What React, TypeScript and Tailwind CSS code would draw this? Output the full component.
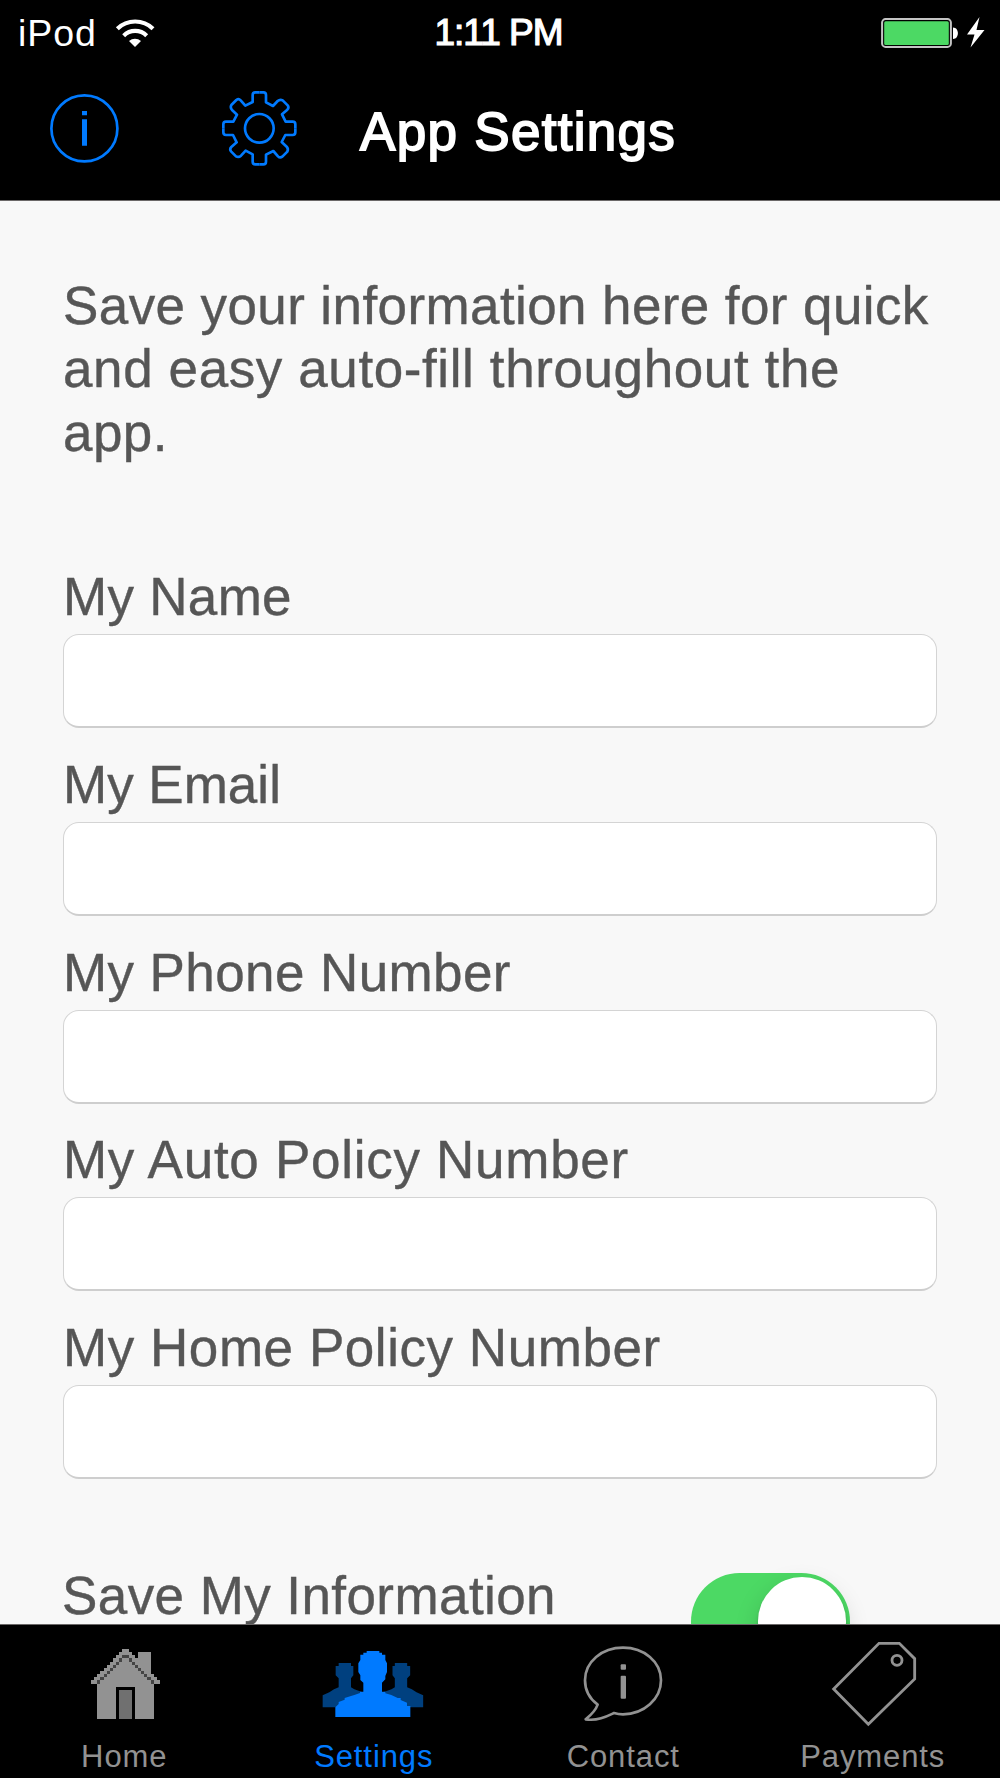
import React, { useState } from "react";

const fields = [
  { id: "name", label: "My Name", tracking: "tracking-[0.3px]" },
  { id: "email", label: "My Email", tracking: "tracking-[0px]" },
  { id: "phone", label: "My Phone Number", tracking: "tracking-[0.4px]" },
  { id: "auto", label: "My Auto Policy Number", tracking: "tracking-[0.72px]" },
  { id: "home", label: "My Home Policy Number", tracking: "tracking-[0.55px]" },
];

function WifiIcon() {
  return (
    <svg width="40" height="30" viewBox="345 48 120 90" fill="none" stroke="white">
      <path d="M352 80A77 77 0 0 1 459 80" strokeWidth="12.5" />
      <path d="M371 101A49 49 0 0 1 440 101" strokeWidth="12.5" />
      <path d="M405 135L387 117A28 28 0 0 1 423 117Z" fill="white" stroke="none" />
    </svg>
  );
}

function BatteryIcon() {
  return (
    <svg width="104" height="32" viewBox="881 16 104 32">
      <rect x="882.1" y="18.1" width="68.8" height="27.8" rx="3.5" fill="none" stroke="#c4c4c4" strokeWidth="2" />
      <rect x="884.2" y="20.2" width="64.6" height="23.8" rx="1.5" fill="#4cd964" />
      <path d="M953 26.5C959.5 26.5 959.5 38 953 38Z" fill="white" />
      <path d="M979.5 16L967 33.5H974.5L970.5 46.5L984.5 29H976.5Z" fill="white" />
    </svg>
  );
}

function InfoIcon() {
  return (
    <svg width="70" height="70" viewBox="0 0 70 70">
      <circle cx="35.4" cy="35.4" r="33" fill="none" stroke="#007aff" strokeWidth="2.7" />
      <path d="M33 18h5v4.2h-5zM33 26.2h5v26.5h-5z" fill="#007aff" />
    </svg>
  );
}

function GearIcon() {
  // one quarter of the outline, turned around the centre
  const quarter =
    "M0 -108H12Q20 -108 20 -100V-78L41 -67L55 -82Q62 -88 70 -84L85 -69Q90 -62 84 -56L68 -42L79 -20H100Q108 -20 108 -12V0";
  return (
    <svg width="76" height="76" viewBox="-115 -115 228 228" fill="none" stroke="#007aff" strokeWidth="8">
      {[0, 90, 180, 270].map((a) => (
        <path key={a} d={quarter} transform={`rotate(${a})`} strokeLinejoin="round" />
      ))}
      <circle r="43" />
    </svg>
  );
}

function HomeIcon() {
  const rows = [0, 1, 2, 3, 4, 5, 6, 7, 8, 9, 10];
  return (
    <svg width="69" height="70" viewBox="0 0 22 22.3" preserveAspectRatio="none" shapeRendering="crispEdges">
      <g fill="#929292">
        {rows.map((r) => (
          <rect key={r} x={10 - r} y={r} width={2 + r * 2} height="1.05" />
        ))}
        <rect x="15" y="1" width="4" height="8" />
        <rect x="2" y="11" width="18" height="11.3" />
      </g>
      <g fill="#444444">
        {rows.slice(2).map((r) => (
          <React.Fragment key={r}>
            <rect x={12 - r} y={r} width="1" height="1" />
            <rect x={9 + r} y={r} width="1" height="1" />
          </React.Fragment>
        ))}
      </g>
      <rect x="8" y="12.1" width="6" height="10.2" fill="black" />
      <rect x="9" y="13.1" width="4" height="9.2" fill="#707070" />
    </svg>
  );
}

function PeopleIcon() {
  const back =
    "M118 99H155V108H162V136L155 145V172L165 178L190 187V232H70V196L90 187L104 178L118 172V145L109 136V108H118Z";
  return (
    <svg width="102" height="68" viewBox="68 60 306 204">
      <g fill="#00407f">
        <path d={back} />
        <path d={back} transform="translate(441.5 0) scale(-1 1)" />
      </g>
      <path
        d="M202 63H240V68H248V74H258V90L263 100V126L258 138V148L248 158V185H258V190L276 195L295 204H304V210L323 218V228H333V261H108V232L118 222V216L136 209V204L155 198L165 195L182 189V185H192V158L183 150V136L177 126V100L183 90V74H192V68H202Z"
        fill="#007aff"
      />
    </svg>
  );
}

function ContactIcon() {
  return (
    <svg width="80" height="78" viewBox="100 46 240 234">
      <path
        d="M144 225C118 206 106 182 106 152C106 96 157 54 220 54C283 54 334 96 334 152C334 208 283 254 220 254Q206 254 193 250C174 259 144 275 108 269C120 259 136 247 144 225Z"
        fill="none"
        stroke="#929292"
        strokeWidth="8"
        strokeLinejoin="round"
      />
      <rect x="213" y="104" width="16" height="16" rx="3" fill="#929292" />
      <rect x="213" y="138" width="16" height="69" rx="3" fill="#929292" />
    </svg>
  );
}

function TagIcon() {
  return (
    <svg width="86" height="86" viewBox="122 33 258 258" fill="none" stroke="#929292" strokeWidth="8.5">
      <path d="M130 177L266 40H327L373 86V147L234 283Z" />
      <circle cx="320" cy="91" r="15" />
    </svg>
  );
}

const tabs = [
  { label: "Home", icon: <HomeIcon />, pad: "pt-[24px] pl-[1px]" },
  { label: "Settings", icon: <PeopleIcon />, pad: "pt-[25px] pr-[2px]" },
  { label: "Contact", icon: <ContactIcon />, pad: "pt-[20px] pr-[1px]" },
  { label: "Payments", icon: <TagIcon />, pad: "pt-[16px] pl-[1px]" },
];

export default function App() {
  const [saved, setSaved] = useState(true);
  const [active, setActive] = useState("Settings");

  return (
    <div className="flex h-[1778px] w-[1000px] flex-col overflow-hidden bg-[#f8f8f8] font-['Liberation_Sans',Arial,sans-serif]">
      <header className="h-[201px] shrink-0 border-b border-[#6b6868] bg-black text-white">
        <div className="grid h-[64px] grid-cols-3 items-center pr-[15px] pl-[18px]">
          <div className="flex items-center gap-[18px]">
            <span className="text-[37.5px] leading-[64px] tracking-[0.9px]">iPod</span>
            <WifiIcon />
          </div>
          <span className="pt-px pr-[6px] text-center text-[37px] leading-[64px] tracking-[-1px] [-webkit-text-stroke:1.2px_white]">
            1:11 PM
          </span>
          <div className="flex justify-end">
            <BatteryIcon />
          </div>
        </div>
        <div className="flex pl-[49px]">
          <button className="mt-[29px] h-[70px]">
            <InfoIcon />
          </button>
          <button className="mt-[26px] ml-[102px] h-[76px]">
            <GearIcon />
          </button>
          <h1 className="mt-[36px] ml-[63px] text-[53px] leading-[63px] tracking-[1.3px] [-webkit-text-stroke:1.8px_white]">
            App Settings
          </h1>
        </div>
      </header>

      <main className="min-h-0 flex-1 overflow-hidden px-[63px] pt-[73px] text-[53px] leading-[63.3px] tracking-[0.42px] text-[#565656] [-webkit-text-stroke:0.4px_#565656]">
        <p className="-mr-[20px] h-[190px] whitespace-nowrap">
          <span className="tracking-[0.4px]">Save your information here for quick</span>
          <br />
          <span className="tracking-[0.6px]">and easy auto-fill throughout the</span>
          <br />
          app.
        </p>
        <form className="mt-[101px] flex flex-col gap-[24.8px]">
          {fields.map((field) => (
            <div key={field.id} className="flex h-[163px] flex-col justify-between">
              <label htmlFor={field.id} className={`h-[63px] ${field.tracking}`}>
                {field.label}
              </label>
              <input
                id={field.id}
                className="h-[94px] w-[874px] rounded-[16px] border border-b-2 border-[#d4d4d4] border-b-[#cecece] bg-white px-5 outline-0"
              />
            </div>
          ))}
        </form>
        <div className="mt-[85px] flex items-start justify-between pr-[87px]">
          <span className="-ml-px">Save My Information</span>
          <button
            role="switch"
            aria-checked={saved}
            onClick={() => setSaved(!saved)}
            className={`mt-[8.5px] flex h-[97px] w-[159px] rounded-full p-[4.5px] ${saved ? "justify-end bg-[#4cd964]" : "justify-start bg-[#e5e5e5]"}`}
          >
            <span className="h-[88px] w-[88px] rounded-full bg-white shadow-[0_9px_25px_rgba(0,0,0,0.15),0_3px_3px_rgba(0,0,0,0.2)]" />
          </button>
        </div>
      </main>

      <nav className="h-[154px] shrink-0 border-t border-[#6b6868] bg-black">
        <div className="grid w-[998px] grid-cols-4">
          {tabs.map((tab) => (
            <button
              key={tab.label}
              onClick={() => setActive(tab.label)}
              className={`flex flex-col items-center ${active === tab.label ? "text-[#007aff]" : "text-[#929292]"}`}
            >
              <span className={`flex h-[112px] ${tab.pad}`}>{tab.icon}</span>
              <span className="pr-px text-[31px] leading-[40px] tracking-[0.9px]">{tab.label}</span>
            </button>
          ))}
        </div>
      </nav>
    </div>
  );
}
